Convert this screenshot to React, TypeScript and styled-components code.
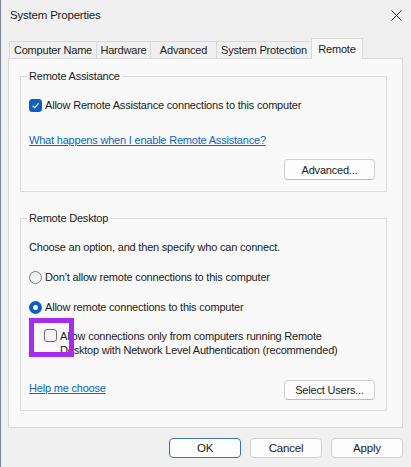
import styled, { createGlobalStyle } from 'styled-components';

const GlobalStyle = createGlobalStyle`
  * { box-sizing: border-box; }
  body {
    margin: 0;
    background: #f0f0f0;
  }
`;

const tabs = [
  { label: 'Computer Name', width: 88 },
  { label: 'Hardware', width: 55 },
  { label: 'Advanced', width: 67 },
  { label: 'System Protection', width: 96 },
  { label: 'Remote', width: 52, active: true },
];

const CheckIcon = () => (
  <svg width="9" height="9" viewBox="0 0 9 9">
    <path d="M1.5 4.6 L3.6 6.6 L7.6 2.4" fill="none" stroke="#fff" strokeWidth="1.2" />
  </svg>
);

const CloseIcon = () => (
  <svg width="11" height="11" viewBox="0 0 11 11">
    <path d="M0.5 0.5 L10.5 10.5 M10.5 0.5 L0.5 10.5" stroke="#1f1f1f" strokeWidth="1" />
  </svg>
);

const App = () => {
  return (
    <>
      <GlobalStyle />
      <Window>
        <TitleBar>
          <Title>System Properties</Title>
          <CloseIcon />
        </TitleBar>

        <TabStrip>
          {tabs.map((t) => (
            <Tab key={t.label} $width={t.width} $active={!!t.active}>
              {t.label}
            </Tab>
          ))}
        </TabStrip>

        <Panel>
          <GroupBox $bottom={11}>
            <Legend>Remote Assistance</Legend>
            <CheckRow $top={14}>
              <Checkbox $checked>
                <CheckIcon />
              </Checkbox>
              <span>Allow Remote Assistance connections to this computer</span>
            </CheckRow>
            <Link href="#" $top={19}>
              What happens when I enable Remote Assistance?
            </Link>
            <ButtonRow $top={11}>
              <span />
              <Button>Advanced...</Button>
            </ButtonRow>
          </GroupBox>

          <GroupBox $bottom={10}>
            <Legend>Remote Desktop</Legend>
            <Text>Choose an option, and then specify who can connect.</Text>
            <CheckRow $top={14}>
              <Radio />
              <span>Don’t allow remote connections to this computer</span>
            </CheckRow>
            <CheckRow $top={14}>
              <Radio $selected />
              <span>Allow remote connections to this computer</span>
            </CheckRow>
            <NlaRow>
              <Checkbox />
              <NlaText>
                Allow connections only from computers running Remote
                <br />
                Desktop with Network Level Authentication (recommended)
              </NlaText>
              <Highlight />
            </NlaRow>
            <ButtonRow $top={23}>
              <Link href="#">Help me choose</Link>
              <Button $height={20}>Select Users...</Button>
            </ButtonRow>
          </GroupBox>
        </Panel>

        <Footer>
          <DialogButton $primary>OK</DialogButton>
          <DialogButton>Cancel</DialogButton>
          <DialogButton>Apply</DialogButton>
        </Footer>
      </Window>
    </>
  );
};

export default App;

const Window = styled.div`
  width: 411px;
  height: 467px;
  display: flex;
  flex-direction: column;
  padding: 0 8px 0 7px;
  border-left: 1px solid #7e858d;
  background: #f0f0f0;
  color: #1b1b1b;
  font-family: 'Segoe UI', 'Liberation Sans', Arial, sans-serif;
  font-size: 11px;
  letter-spacing: -0.2px;
`;

const TitleBar = styled.div`
  height: 30px;
  display: flex;
  align-items: center;
  justify-content: space-between;
  padding: 0 1px 0 2px;
`;

const Title = styled.div`
  font-size: 11.5px;
  color: #1a1a1a;
`;

const TabStrip = styled.div`
  margin-top: 8px;
  height: 20px;
  display: flex;
  align-items: flex-end;
  padding-left: 1px;
`;

const Tab = styled.div<{ $width: number; $active: boolean }>`
  position: relative;
  z-index: ${(p) => (p.$active ? 2 : 1)};
  width: ${(p) => p.$width}px;
  height: ${(p) => (p.$active ? 21 : 17)}px;
  margin-bottom: ${(p) => (p.$active ? -1 : 0)}px;
  margin-left: -1px;
  display: flex;
  align-items: center;
  justify-content: center;
  padding-bottom: ${(p) => (p.$active ? 1 : 0)}px;
  border: 1px solid #d9d9d9;
  border-bottom: none;
  background: ${(p) => (p.$active ? '#f9f9f9' : '#f0f0f0')};
  white-space: nowrap;

  &:first-child {
    margin-left: 0;
  }
`;

const Panel = styled.div`
  height: 370px;
  display: flex;
  flex-direction: column;
  gap: 19px;
  padding: 10px 15px 0 11px;
  border: 1px solid #d9d9d9;
  background: #f9f9f9;
`;

const GroupBox = styled.fieldset<{ $bottom: number }>`
  margin: 0;
  min-width: 0;
  display: flex;
  flex-direction: column;
  padding: 0 11px ${(p) => p.$bottom}px 8px;
  border: 1px solid #dcdcdc;
`;

const Legend = styled.legend`
  margin-left: -2px;
  padding: 0 2px;
  line-height: 14px;
`;

const CheckRow = styled.div<{ $top: number }>`
  margin-top: ${(p) => p.$top}px;
  height: 16px;
  display: flex;
  align-items: center;
  gap: 3px;
  white-space: nowrap;
`;

const Checkbox = styled.span<{ $checked?: boolean }>`
  width: 13px;
  height: 13px;
  flex-shrink: 0;
  display: flex;
  align-items: center;
  justify-content: center;
  border-radius: 3px;
  border: 1px solid ${(p) => (p.$checked ? '#0f5fc0' : '#6e6e6e')};
  background: ${(p) => (p.$checked ? '#0f5fc0' : '#f4f4f4')};
`;

const Radio = styled.span<{ $selected?: boolean }>`
  width: 13px;
  height: 13px;
  flex-shrink: 0;
  border-radius: 50%;
  border: ${(p) => (p.$selected ? '4px solid #0f5fc0' : '1px solid #777')};
  background: ${(p) => (p.$selected ? '#fff' : '#f4f4f4')};
`;

const Link = styled.a<{ $top?: number }>`
  margin-top: ${(p) => p.$top ?? 0}px;
  align-self: flex-start;
  line-height: 16px;
  color: #0b66c3;
  text-decoration: underline;
`;

const Text = styled.div`
  margin-top: 14px;
  line-height: 16px;
`;

const ButtonRow = styled.div<{ $top: number }>`
  margin-top: ${(p) => p.$top}px;
  display: flex;
  align-items: center;
  justify-content: space-between;
`;

const Button = styled.button<{ $height?: number }>`
  width: 91px;
  height: ${(p) => p.$height ?? 21}px;
  padding: 0;
  border: 1px solid #d0d0d0;
  border-bottom-color: #bcbcbc;
  border-radius: 4px;
  background: #fdfdfd;
  color: #1b1b1b;
  font: inherit;
  letter-spacing: inherit;
`;

const NlaRow = styled.div`
  position: relative;
  margin: 14px 0 0 15px;
  display: flex;
  align-items: flex-start;
  gap: 3px;
`;

const NlaText = styled.div`
  line-height: 14px;
  white-space: nowrap;
`;

const Highlight = styled.div`
  position: absolute;
  left: -15px;
  top: -11px;
  width: 45px;
  height: 39px;
  border: 5px solid #a62cf0;
`;

const Footer = styled.div`
  margin-top: 10px;
  display: flex;
  justify-content: flex-end;
  gap: 9px;
`;

const DialogButton = styled.button<{ $primary?: boolean }>`
  width: 72px;
  height: 20px;
  padding: 0;
  border: 1px solid ${(p) => (p.$primary ? '#3a73b5' : '#d0d0d0')};
  border-radius: 4px;
  background: #fdfdfd;
  color: #1b1b1b;
  font: inherit;
  font-size: 11.5px;
  letter-spacing: inherit;
`;
